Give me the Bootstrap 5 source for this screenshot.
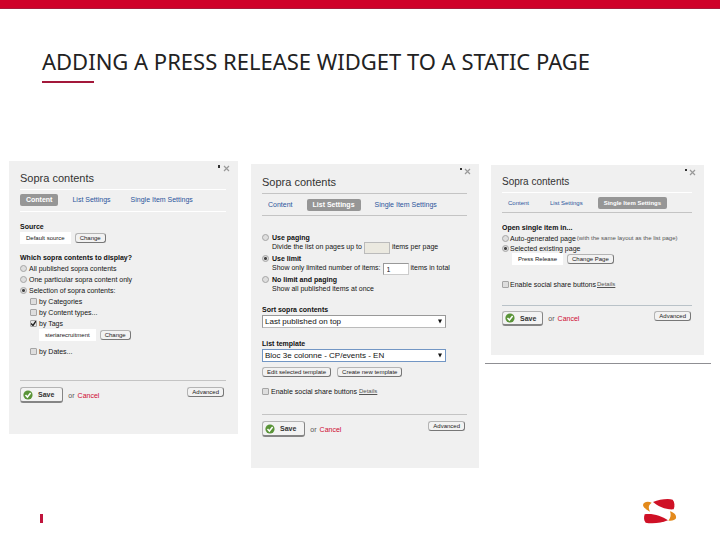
<!DOCTYPE html>
<html lang="en">
<head>
<meta charset="utf-8">
<meta name="viewport" content="width=device-width, initial-scale=1">
<title>Adding a press release widget to a static page</title>
<link href="https://cdn.jsdelivr.net/npm/bootstrap@5.3.0/dist/css/bootstrap.min.css" rel="stylesheet">
<style>
body{font-family:"Liberation Sans",Arial,sans-serif;font-size:7px;line-height:11px;color:#151515;background:#fff}
.topbar{height:9px;background:#cf0029;border-bottom:1px solid #a81a3c}
.headline{padding:38px 42px 0}
.headline h1{font-family:"Noto Sans",sans-serif;font-size:22px;line-height:28px;font-weight:400;color:#222;margin:0}
.headline .rule{width:52px;height:2px;background:#a3183a;margin-top:6px}
.board{padding:78px 9px 0}
.slot1{flex:229 1 0;margin-right:13px}
.slot2{flex:228 1 0;margin-right:6px;padding-top:3px}
.slot3{flex:226 1 0;padding-top:4px}
.slot3 .panel{margin:0 7px 0 6px;padding-bottom:29px}
.slot3 .base{border-top:1px solid #8f8f93;margin-top:8px}
.panel{position:relative;background:#f0f0f0;padding:0 12px 31px 11px}
.panel h2{font-size:11px;line-height:12px;font-weight:400;color:#333;margin:0;padding:11px 0 5px;border-bottom:1px solid #c4c4c4}
.slot2 .panel h2{padding-top:12px}
.slot3 .panel h2{padding-bottom:4px;font-size:10px}
.panel .white-line{border-color:#fff}
.closer{position:absolute;top:4px;right:8px;border:0;background:none;padding:0;width:7px;height:7px;display:flex}
.speck{position:absolute;top:4px;right:18px;width:2px;height:3px;background:#333}
.slot2 .speck,.slot3 .speck{height:2px;right:17px}
.tabs{padding:4px 0 5px;gap:8px;border-bottom:1px solid #c4c4c4}
.tabs a{color:#2b559c;text-decoration:none;padding:0 6px;line-height:12px;border-radius:2px;white-space:nowrap}
.slot2 .tabs{padding:5px 0 4px}
.slot3 .tabs{padding:4px 0 3px;font-size:6px;gap:9px}
.tabs a.on{background:#969696;color:#fff;font-weight:700}
.cap{font-weight:700;line-height:10px;color:#111;display:block}
.gap-a{margin-top:10px}.gap-b{margin-top:9px}.gap-c{margin-top:14px}.gap-d{margin-top:5px}.gap-e{margin-top:18px}.gap-f{margin-top:11px}
.opt{gap:2px;height:11px;white-space:nowrap}
.slot3 .opt{height:10px;gap:1px}
.opt input,.pick input[type=radio]{appearance:none;flex:none;width:7px;height:7px;margin:0;border:1px solid #a5a5a5;background:#dedede;border-radius:1px}
.panel input[type=radio]{border-radius:50%}
.panel input[type=radio]:checked{background:radial-gradient(circle,#444 0 1px,#ddd 2px)}
.opt input[type=checkbox]:checked{background:#e6e6e6 url("data:image/svg+xml,%3Csvg xmlns='http://www.w3.org/2000/svg' viewBox='0 0 7 7'%3E%3Cpath d='M1 3.5 3 5.5 6 1' fill='none' stroke='%23222' stroke-width='1.4'/%3E%3C/svg%3E") center/7px}
.inset{padding-left:10px}
.inset2{padding-left:19px}
.chosen{background:#fff;height:12px;padding:0 6px;line-height:12px;font-size:6px;white-space:nowrap}
.minor{font-size:6px;line-height:8px;border:1px solid #b4b4b4;border-right-color:#777;border-bottom-color:#777;border-radius:3px;background:#f2f2f2;color:#222;padding:0 4px;white-space:nowrap}
.twin{gap:6px}
.finish{margin-top:23px;border-top:1px solid #c4c4c4;padding:6px 2px 0 0}
.slot2 .finish{margin-top:17px}
.slot3 .finish{margin-top:16px;padding:5px 1px 0 0;border-color:#b9c2c8}
.save{height:16px;border:1px solid #b4b4b4;border-right-color:#858585;border-bottom:2px solid #858585;border-radius:3px;background:#f3f3f3;font-weight:700;color:#333;padding:0 8px 0 2px;gap:5px}
.slot3 .save{height:15px;padding-right:6px}
.or{margin:0 3px 0 5px;color:#555}
.cancel{color:#cf0a30;text-decoration:none}
.pick{gap:3px;height:20px;margin-bottom:1px;white-space:nowrap}
.pick .cap{line-height:8px}
.pick .sub{line-height:9px;gap:2px;height:12px}
.pick input[type=text]{width:26px;height:12px;border:1px solid #999;border-right-color:#ccc;border-bottom-color:#ccc;background:#fff;font-size:7px;padding:0 3px;color:#222}
.pick input[type=text]:disabled{background:#ebe9e0;border-color:#bbb}
.drop{position:relative;max-width:184px}
.drop select{appearance:none;width:100%;height:13px;border:1px solid #999;border-bottom-color:#bbb;background:#fff;font-size:8px;line-height:11px;padding:0 2px;color:#111;border-radius:0;display:block}
.drop select.hot{border-color:#7296c4}
.drop svg{position:absolute;right:4px;top:4px;pointer-events:none}
.sort{margin-top:9px}
.details{color:#555;font-size:6px}
.pagefoot{padding:0 43px 14px 40px}
.marker{width:3px;height:9px;background:#c0143c;margin-bottom:3px}
</style>
<script src="https://cdn.jsdelivr.net/npm/bootstrap@5.3.0/dist/js/bootstrap.bundle.min.js"></script>
</head>
<body class="min-vh-100 d-flex flex-column">
<svg class="d-none">
  <symbol id="x" viewBox="0 0 7 7"><path d="M1 1 6 6M6 1 1 6" stroke="#999" stroke-width="1.2" fill="none"/></symbol>
  <symbol id="ok" viewBox="0 0 10 10"><circle cx="5" cy="5" r="4.6" fill="#5a9438"/><path d="M2.5 5 4.4 7 7.6 3" stroke="#fff" stroke-width="1.5" fill="none"/></symbol>
  <symbol id="down" viewBox="0 0 4 4"><path d="M0 0H4L2 4z" fill="#111"/></symbol>
</svg>
<div class="topbar"></div>
<header class="headline">
  <h1>ADDING A PRESS RELEASE WIDGET TO A STATIC PAGE</h1>
  <div class="rule"></div>
</header>
<main class="board d-flex align-items-start">
  <div class="slot1">
    <section class="panel">
      <span class="speck"></span>
      <button class="closer" aria-label="Close"><svg width="7" height="7"><use href="#x"/></svg></button>
      <h2 class="white-line">Sopra contents</h2>
      <nav class="tabs white-line d-flex"><a href="#" class="on">Content</a><a href="#">List Settings</a><a href="#">Single Item Settings</a></nav>
      <strong class="cap gap-a">Source</strong>
      <div class="d-flex align-items-center gap-1"><span class="chosen">Default source</span><button class="minor">Change</button></div>
      <strong class="cap gap-b">Which sopra contents to display?</strong>
      <label class="opt d-flex align-items-center"><input type="radio" name="which">All published sopra contents</label>
      <label class="opt d-flex align-items-center"><input type="radio" name="which">One particular sopra content only</label>
      <label class="opt d-flex align-items-center"><input type="radio" name="which" checked>Selection of sopra contents:</label>
      <div class="inset">
        <label class="opt d-flex align-items-center"><input type="checkbox">by Categories</label>
        <label class="opt d-flex align-items-center"><input type="checkbox">by Content types...</label>
        <label class="opt d-flex align-items-center"><input type="checkbox" checked>by Tags</label>
      </div>
      <div class="inset2 d-flex align-items-center gap-1"><span class="chosen">steriarecruitment</span><button class="minor">Change</button></div>
      <div class="inset gap-d"><label class="opt d-flex align-items-center"><input type="checkbox">by Dates...</label></div>
      <div class="finish d-flex align-items-start">
        <button class="save d-flex align-items-center"><svg width="10" height="10"><use href="#ok"/></svg>Save</button>
        <div class="d-flex align-self-center"><span class="or">or</span><a href="#" class="cancel">Cancel</a></div>
        <button class="minor ms-auto">Advanced</button>
      </div>
    </section>
  </div>
  <div class="slot2">
    <section class="panel">
      <span class="speck"></span>
      <button class="closer" aria-label="Close"><svg width="7" height="7"><use href="#x"/></svg></button>
      <h2>Sopra contents</h2>
      <nav class="tabs d-flex"><a href="#">Content</a><a href="#" class="on">List Settings</a><a href="#">Single Item Settings</a></nav>
      <div class="pick gap-e d-flex align-items-start">
        <input type="radio" name="limit" id="l1">
        <div><label class="cap" for="l1">Use paging</label><div class="sub d-flex"><label for="n1">Divide the list on pages up to</label><input type="text" id="n1" disabled><span>items per page</span></div></div>
      </div>
      <div class="pick d-flex align-items-start">
        <input type="radio" name="limit" id="l2" checked>
        <div><label class="cap" for="l2">Use limit</label><div class="sub d-flex"><label for="n2">Show only limited number of items:</label><input type="text" id="n2" value="1"><span>items in total</span></div></div>
      </div>
      <div class="pick d-flex align-items-start">
        <input type="radio" name="limit" id="l3">
        <div><label class="cap" for="l3">No limit and paging</label><div class="sub">Show all published items at once</div></div>
      </div>
      <label class="cap sort" for="s1">Sort sopra contents</label>
      <div class="drop"><select id="s1"><option>Last published on top</option></select><svg width="4" height="5"><use href="#down"/></svg></div>
      <label class="cap gap-f" for="s2">List template</label>
      <div class="drop"><select id="s2" class="hot"><option>Bloc 3e colonne - CP/events - EN</option></select><svg width="4" height="5"><use href="#down"/></svg></div>
      <div class="d-flex gap-d twin"><button class="minor">Edit selected template</button><button class="minor">Create new template</button></div>
      <div class="opt gap-b d-flex align-items-center"><input type="checkbox" id="c2"><label for="c2">Enable social share buttons</label><a href="#" class="details">Details</a></div>
      <div class="finish d-flex align-items-start">
        <button class="save d-flex align-items-center"><svg width="10" height="10"><use href="#ok"/></svg>Save</button>
        <div class="d-flex align-self-center"><span class="or">or</span><a href="#" class="cancel">Cancel</a></div>
        <button class="minor ms-auto">Advanced</button>
      </div>
    </section>
  </div>
  <div class="slot3">
    <section class="panel">
      <span class="speck"></span>
      <button class="closer" aria-label="Close"><svg width="7" height="7"><use href="#x"/></svg></button>
      <h2 class="white-line">Sopra contents</h2>
      <nav class="tabs d-flex"><a href="#">Content</a><a href="#">List Settings</a><a href="#" class="on">Single Item Settings</a></nav>
      <strong class="cap gap-a">Open single item in...</strong>
      <label class="opt d-flex align-items-center"><input type="radio" name="open">Auto-generated page <span class="details">(with the same layout as the list page)</span></label>
      <label class="opt d-flex align-items-center"><input type="radio" name="open" checked>Selected existing page</label>
      <div class="inset d-flex align-items-center gap-1"><span class="chosen">Press Release</span><button class="minor">Change Page</button></div>
      <div class="opt gap-c d-flex align-items-center"><input type="checkbox" id="c3"><label for="c3">Enable social share buttons</label><a href="#" class="details">Details</a></div>
      <div class="finish d-flex align-items-start">
        <button class="save d-flex align-items-center"><svg width="10" height="10"><use href="#ok"/></svg>Save</button>
        <div class="d-flex align-self-center"><span class="or">or</span><a href="#" class="cancel">Cancel</a></div>
        <button class="minor ms-auto">Advanced</button>
      </div>
    </section>
    <div class="base"></div>
  </div>
</main>
<footer class="pagefoot mt-auto d-flex justify-content-between align-items-end">
  <span class="marker"></span>
  <svg width="34" height="28" viewBox="42 38 102 84" role="img" aria-label="Logo">
    <path d="M68 52C56 46 42 50 42 60C43 68 52 72 63 79C58 68 57 60 68 52Z" fill="#e38a1c"/>
    <path d="M72 50C90 42 118 39 131 43C137 50 138 62 134 72C112 74 88 64 72 50Z" fill="#cf1126"/>
    <path d="M47 87C70 83 98 92 117 105C98 114 66 116 50 112C44 105 44 96 47 87Z" fill="#cf1126"/>
    <path d="M123 78C136 82 143 90 141 99C138 105 128 108 118 106C125 98 127 88 123 78Z" fill="#e38a1c"/>
  </svg>
</footer>
</body>
</html>
